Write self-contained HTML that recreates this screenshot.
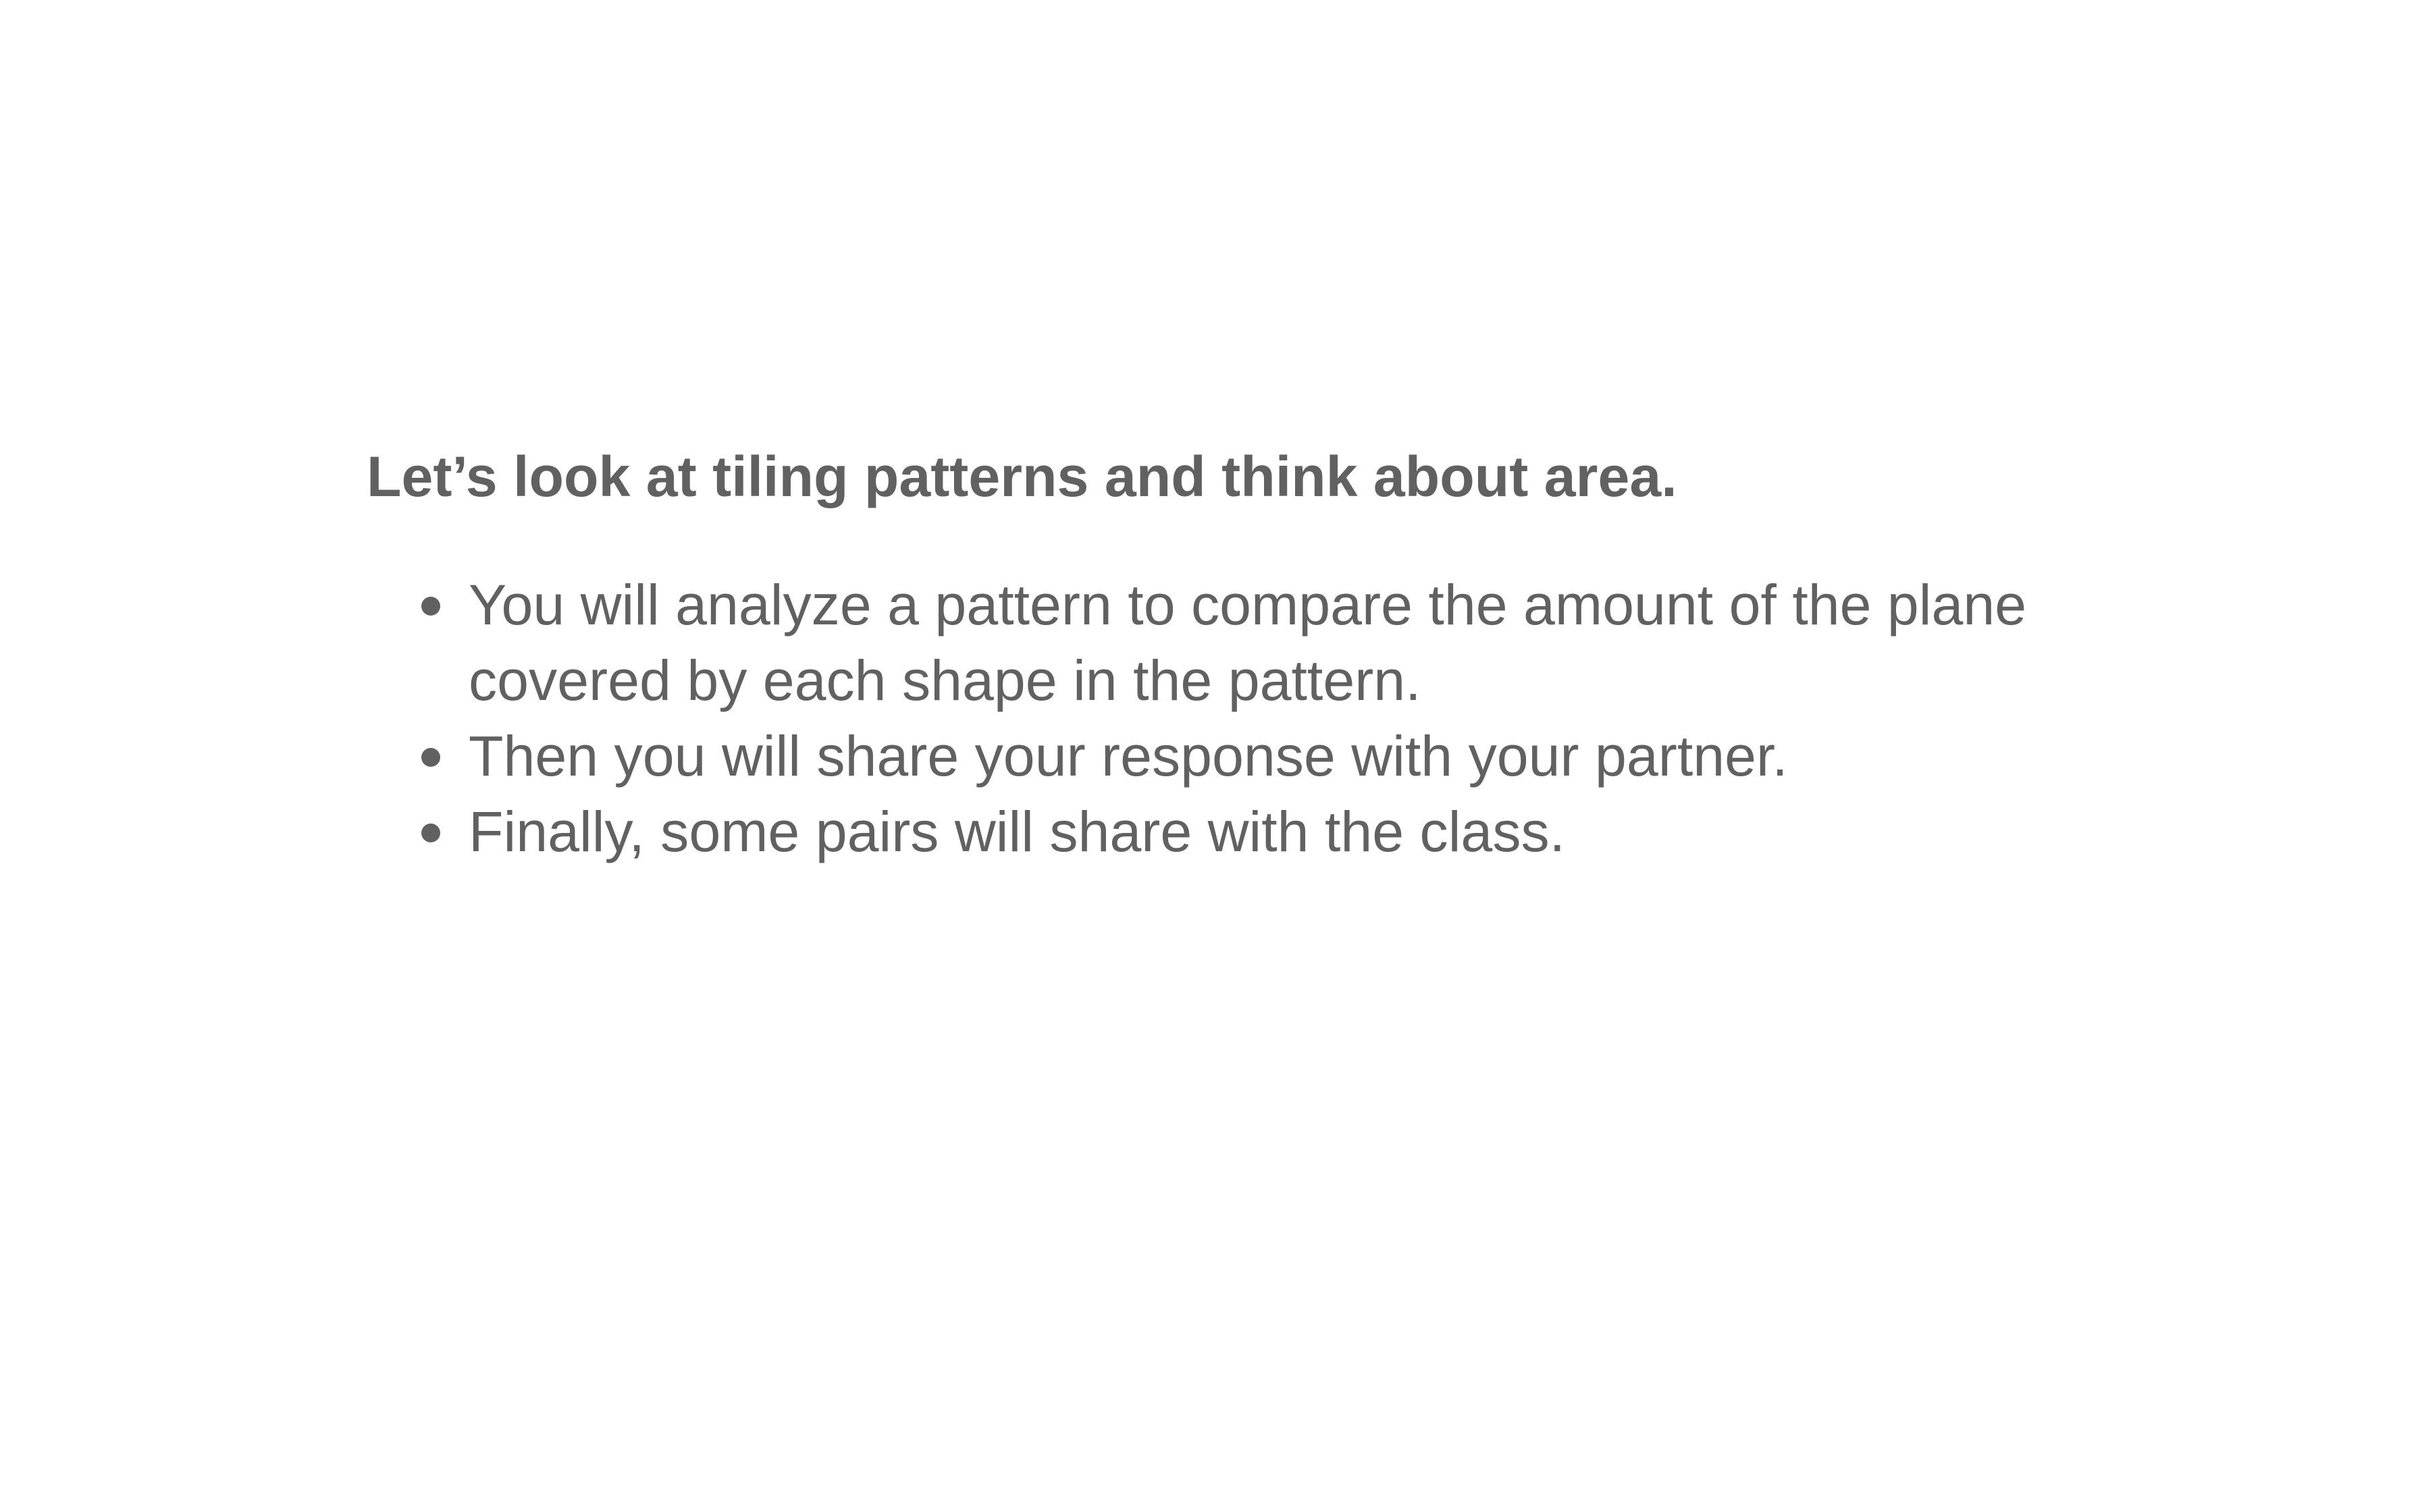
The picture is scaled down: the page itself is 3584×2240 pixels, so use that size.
<!DOCTYPE html>
<html><head><meta charset="utf-8"><style>
html,body{margin:0;padding:0;background:#fff;}
body{width:3584px;height:2240px;position:relative;overflow:hidden;font-family:"Liberation Sans",sans-serif;color:#616161;}
.l{position:absolute;white-space:nowrap;line-height:1;}
.h{left:543px;top:664px;font-size:84.3px;font-weight:bold;}
.b{left:694px;font-size:84.3px;}
.d{position:absolute;left:624px;width:28px;height:28px;border-radius:50%;background:#616161;}
</style></head><body>
<div class="l h">Let’s look at tiling patterns and think about area.</div>
<div class="d" style="top:884px"></div>
<div class="l b" style="top:854px">You will analyze a pattern to compare the amount of the plane</div>
<div class="l b" style="top:966px">covered by each shape in the pattern.</div>
<div class="d" style="top:1108px"></div>
<div class="l b" style="top:1078px">Then you will share your response with your partner.</div>
<div class="d" style="top:1220px"></div>
<div class="l b" style="top:1190px">Finally, some pairs will share with the class.</div>
</body></html>
